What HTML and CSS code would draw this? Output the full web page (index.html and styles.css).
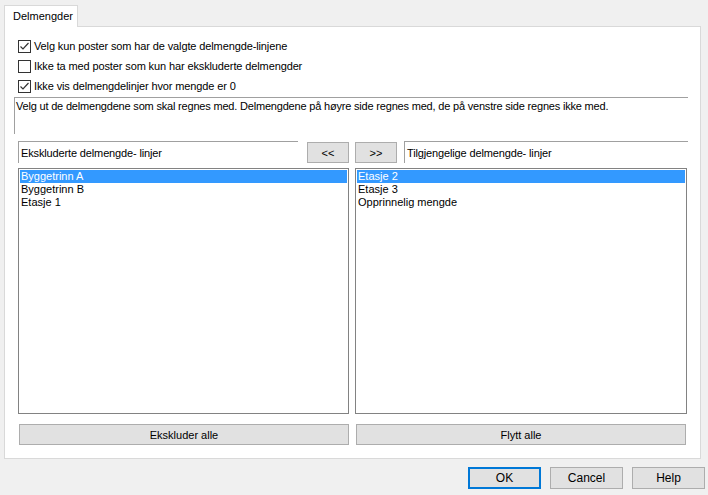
FILE: index.html
```html
<!DOCTYPE html>
<html lang="no">
<head>
<meta charset="utf-8">
<title>Delmengder</title>
<link rel="stylesheet" href="styles.css">
</head>
<body>
<div class="dialog">
  <div class="tabs">
    <div class="tab">Delmengder</div>
  </div>
  <div class="panel">
    <label class="check-row">
      <span class="box"><svg width="13" height="13" viewBox="0 0 13 13"><polyline points="2.5,6.5 5,9 10.5,3" fill="none" stroke="#333" stroke-width="1.2"/></svg></span>
      <span class="cap">Velg kun poster som har de valgte delmengde-linjene</span>
    </label>
    <label class="check-row">
      <span class="box"></span>
      <span class="cap">Ikke ta med poster som kun har ekskluderte delmengder</span>
    </label>
    <label class="check-row">
      <span class="box"><svg width="13" height="13" viewBox="0 0 13 13"><polyline points="2.5,6.5 5,9 10.5,3" fill="none" stroke="#333" stroke-width="1.2"/></svg></span>
      <span class="cap">Ikke vis delmengdelinjer hvor mengde er 0</span>
    </label>
    <div class="desc">Velg ut de delmengdene som skal regnes med. Delmengdene på høyre side regnes med, de på venstre side regnes ikke med.</div>
    <div class="cols">
      <div class="col">
        <div class="head-row">
          <div class="label-box">Ekskluderte delmengde- linjer</div>
          <button class="btn small left-gap">&lt;&lt;</button>
        </div>
        <div class="list">
          <div class="item sel">Byggetrinn A</div>
          <div class="item">Byggetrinn B</div>
          <div class="item">Etasje 1</div>
        </div>
        <button class="btn wide">Ekskluder alle</button>
      </div>
      <div class="col">
        <div class="head-row">
          <button class="btn small">&gt;&gt;</button>
          <div class="label-box right-gap">Tilgjengelige delmengde- linjer</div>
        </div>
        <div class="list">
          <div class="item sel">Etasje 2</div>
          <div class="item">Etasje 3</div>
          <div class="item">Opprinnelig mengde</div>
        </div>
        <button class="btn wide">Flytt alle</button>
      </div>
    </div>
  </div>
  <div class="actions">
    <button class="btn act default">OK</button>
    <button class="btn act">Cancel</button>
    <button class="btn act">Help</button>
  </div>
</div>
</body>
</html>
```

FILE: styles.css
```css
* { box-sizing: border-box; }
html, body {
  margin: 0;
  padding: 0;
  background: #f0f0f0;
  font-family: "Liberation Sans", Arial, sans-serif;
  font-size: 11px;
  color: #000;
}
.dialog {
  width: 708px;
  height: 495px;
  padding: 5px 0 0 4px;
}
.tabs {
  display: flex;
  height: 21px;
  position: relative;
  z-index: 1;
}
.tab {
  width: 74px;
  height: 22px;
  background: #fff;
  border: 1px solid #d9d9d9;
  border-bottom: none;
  padding: 4px 0 0 8px;
}
.panel {
  width: 697px;
  height: 433px;
  background: #fff;
  border: 1px solid #d9d9d9;
  padding: 9px 12px 0 13px;
  display: flex;
  flex-direction: column;
}
.check-row {
  display: flex;
  align-items: center;
  height: 20px;
  gap: 3px;
}
.cap { letter-spacing: -0.12px; }
.box {
  width: 13px;
  height: 13px;
  border: 1px solid #333;
  background: #fff;
  display: flex;
  align-items: center;
  justify-content: center;
  flex: none;
}
.box svg { display: block; margin: -1px; }
.desc {
  margin-top: 1px;
  margin-left: -4px;
  height: 37px;
  border-top: 1px solid #a0a0a0;
  border-left: 1px solid #a0a0a0;
  padding: 2px 0 0 1px;
  white-space: nowrap;
  letter-spacing: -0.19px;
}
.cols {
  margin-top: 7px;
  display: grid;
  grid-template-columns: 331px 332px;
  column-gap: 6px;
}
.col {
  display: flex;
  flex-direction: column;
}
.head-row {
  display: flex;
  align-items: flex-start;
  height: 22px;
}
.label-box {
  flex: 1;
  height: 22px;
  border-top: 1px solid #a0a0a0;
  border-left: 1px solid #a0a0a0;
  padding: 5px 0 0 2px;
  white-space: nowrap;
  letter-spacing: -0.14px;
}
.label-box.right-gap { margin-left: 7px; margin-right: -1px; }
.btn {
  font-family: inherit;
  font-size: 11px;
  color: #000;
  background: #e1e1e1;
  border: 1px solid #adadad;
  padding: 0;
  margin: 0;
}
.btn.small {
  width: 42px;
  height: 21px;
  margin-top: 1px;
}
.btn.small.left-gap { margin-left: 9px; }
.list {
  margin-top: 5px;
  height: 246px;
  border: 1px solid #828282;
  padding: 1px 1px 0 1px;
  background: #fff;
}
.item {
  height: 13px;
  line-height: 13px;
  padding-left: 1px;
  white-space: nowrap;
}
.item.sel {
  background: #3399ff;
  color: #fff;
}
.btn.wide {
  margin-top: 10px;
  height: 21px;
  width: 330px;
  margin-left: 1px;
}
.actions {
  display: flex;
  justify-content: flex-end;
  gap: 9px;
  padding: 8px 3px 0 0;
}
.btn.act {
  width: 73px;
  height: 22px;
  font-size: 12px;
}
.btn.default {
  border: 2px solid #0078d7;
}
```
